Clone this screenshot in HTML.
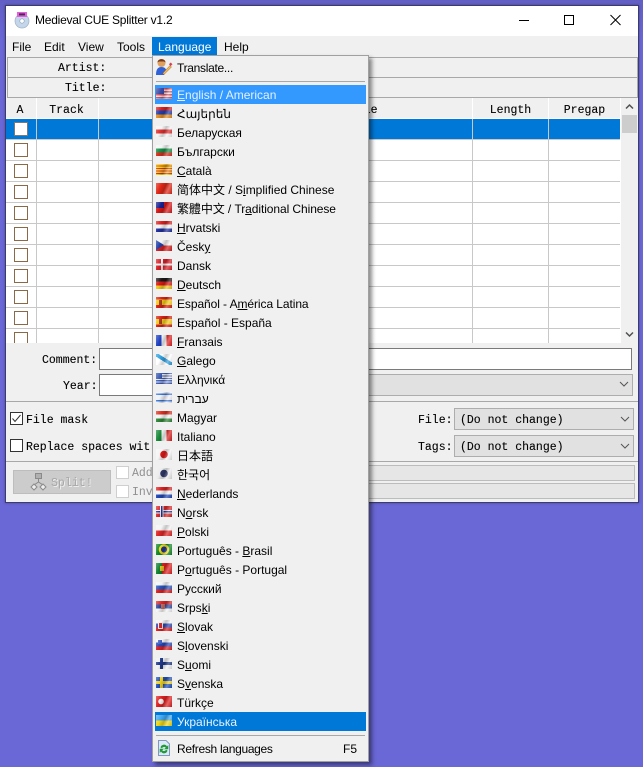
<!DOCTYPE html>
<html lang="en"><head><meta charset="utf-8"><title>Medieval CUE Splitter v1.2</title>
<style>
html,body{margin:0;padding:0}
body{width:643px;height:767px;overflow:hidden;position:relative;background:linear-gradient(#625fc4,#6a67d6 40px);font-family:"Liberation Sans","Noto Sans CJK SC",sans-serif;font-size:12px;color:#000}
div,span.a{position:absolute;box-sizing:border-box}
.m{font-family:"Liberation Mono",monospace;font-size:11.5px;white-space:pre;line-height:16px;-webkit-text-stroke:.1px #000}
#win{left:5px;top:5px;width:634px;height:498px;background:#f0f0f0;border:1px solid #3c3c68;box-shadow:0 0 2px rgba(30,30,80,.5)}
.abs{position:absolute}
.l{height:1px;background:#a8a8a8}
.h{height:1px;background:#c8c8c8;left:6px;width:614px}
.v{width:1px;background:#c8c8c8;top:119px;height:224px}
.cb{width:14px;height:14px;background:#fff;border:1px solid #8a6a46;left:14px}
.cmb{background:#e1e1e1;border:1px solid #adadad}
.th{top:98px;height:20px;background:#f0f0f0;text-align:center;line-height:25px}
#menu{left:152px;top:55px;width:217px;height:707px;background:#f0f0f0;border:1px solid #a0a0a0;box-shadow:3px 3px 4px rgba(0,0,0,.45)}
.r{left:155px;width:211px;height:19px;line-height:21px;padding-left:22px;white-space:nowrap}
.f{left:156px;width:16px;height:11px}
.f::after{content:"";position:absolute;inset:0;background:linear-gradient(115deg,rgba(255,255,255,.32),rgba(255,255,255,0) 30%,rgba(0,0,0,.2) 52%,rgba(255,255,255,.3) 72%,rgba(0,0,0,.16))}
u{text-decoration:underline;text-underline-offset:1px}
</style></head><body>
<div id="win"></div>

<!-- title bar -->
<div style="left:6px;top:6px;width:632px;height:30px;background:#fff"></div>
<svg class="abs" style="left:14px;top:11px" width="16" height="18" viewBox="0 0 16 18"><circle cx="8" cy="10" r="7" fill="#c4d6ea" stroke="#9fb0c4" stroke-width=".7"/><circle cx="8" cy="10" r="2.2" fill="#fff" stroke="#8a9ab0" stroke-width=".6"/><rect x="3" y="1" width="10" height="5" fill="#e85ae0"/><rect x="5" y="2.4" width="6" height="2" fill="#40304a"/></svg>
<div style="left:35px;top:13px;font-size:12px;line-height:15px;white-space:nowrap;letter-spacing:-.23px">Medieval CUE Splitter v1.2</div>
<svg class="abs" style="left:515px;top:10px" width="115" height="20" viewBox="0 0 115 20" fill="none" stroke="#000" stroke-width="1"><path d="M4 10.500H14"/><rect x="49.500" y="5.500" width="9" height="9"/><path d="M95.500 5L105.500 15M105.500 5L95.500 15"/></svg>

<!-- menu bar -->
<div style="left:152px;top:37px;width:65px;height:18px;background:#0078d7"></div>
<div style="left:12px;top:40px;line-height:14px">File</div>
<div style="left:44px;top:40px;line-height:14px">Edit</div>
<div style="left:78px;top:40px;line-height:14px">View</div>
<div style="left:117px;top:40px;line-height:14px">Tools</div>
<div style="left:158px;top:40px;line-height:14px;color:#fff">Language</div>
<div style="left:224px;top:40px;line-height:14px">Help</div>

<!-- artist / title -->
<div style="left:7px;top:57px;width:631px;height:41px;border:1px solid #a8a8a8;background:#f0f0f0"></div>
<div class="l" style="left:7px;top:77px;width:631px"></div>
<div class="m" style="left:58px;top:61px">Artist:</div>
<div class="m" style="left:65px;top:81px">Title:</div>

<!-- table -->
<div style="left:6px;top:98px;width:632px;height:245px;background:#fff"></div>
<div class="th m" style="left:6px;width:30px;padding-right:2px">A</div>
<div class="th m" style="left:37px;width:61px;padding-right:2px">Track</div>
<div class="th m" style="left:99px;width:373px"><span style="position:absolute;left:244px;top:0">Title</span></div>
<div class="th m" style="left:473px;width:75px">Length</div>
<div class="th m" style="left:549px;width:71px">Pregap</div>
<div style="left:6px;top:119px;width:614px;height:20px;background:#0078d7"></div>
<div class="v" style="left:36px"></div><div class="v" style="left:98px"></div><div class="v" style="left:472px"></div><div class="v" style="left:548px"></div>
<div class="h" style="top:139px"></div><div class="h" style="top:160px"></div><div class="h" style="top:181px"></div><div class="h" style="top:202px"></div><div class="h" style="top:223px"></div><div class="h" style="top:244px"></div><div class="h" style="top:265px"></div><div class="h" style="top:286px"></div><div class="h" style="top:307px"></div><div class="h" style="top:328px"></div>
<div class="cb" style="top:122px;border-color:#7a7a7a"></div><div class="cb" style="top:143px"></div><div class="cb" style="top:164px"></div><div class="cb" style="top:185px"></div><div class="cb" style="top:206px"></div><div class="cb" style="top:227px"></div><div class="cb" style="top:248px"></div><div class="cb" style="top:269px"></div><div class="cb" style="top:290px"></div><div class="cb" style="top:311px"></div><div class="cb" style="top:332px;height:11px;border-bottom:0"></div>
<!-- scrollbar -->
<div style="left:621px;top:98px;width:17px;height:245px;background:#f0f0f0"></div>
<div style="left:622px;top:115px;width:15px;height:18px;background:#cdcdcd"></div>
<svg class="abs" style="left:621px;top:98px" width="17" height="245" viewBox="0 0 17 245" fill="none" stroke="#505050" stroke-width="1.500"><path d="M5 10.500L8.500 7L12 10.500"/><path d="M5 234.500L8.500 238L12 234.500"/></svg>
<div style="left:6px;top:343px;width:632px;height:159px;background:#f0f0f0"></div>

<!-- fields -->
<div class="m" style="left:42px;top:353px">Comment:</div>
<div class="m" style="left:63px;top:379px">Year:</div>
<div style="left:99px;top:348px;width:533px;height:22px;background:#fff;border:1px solid #7a7a7a"></div>
<div style="left:99px;top:374px;width:60px;height:22px;background:#fff;border:1px solid #7a7a7a"></div>
<div class="cmb" style="left:360px;top:374px;width:273px;height:22px"></div>
<svg class="abs" style="left:619px;top:381px" width="10" height="7" fill="none" stroke="#555"><path d="M1 1L5 5L9 1"/></svg>
<div class="l" style="left:6px;top:401px;width:632px"></div>

<div style="left:10px;top:412px;width:13px;height:13px;background:#fff;border:1px solid #333"></div>
<svg class="abs" style="left:10px;top:412px" width="13" height="13" fill="none" stroke="#333"><path d="M2.500 6.500L5 9.500L10.500 3"/></svg>
<div class="m" style="left:26px;top:413px">File mask</div>
<div style="left:10px;top:439px;width:13px;height:13px;background:#fff;border:1px solid #333"></div>
<div class="m" style="left:26px;top:440px">Replace spaces wit</div>

<div class="m" style="left:418px;top:413px">File:</div>
<div class="m" style="left:418px;top:440px">Tags:</div>
<div class="cmb" style="left:454px;top:408px;width:180px;height:22px"></div>
<div class="cmb" style="left:454px;top:435px;width:180px;height:22px"></div>
<div class="m" style="left:460px;top:413px">(Do not change)</div>
<div class="m" style="left:460px;top:440px">(Do not change)</div>
<svg class="abs" style="left:620px;top:416px" width="10" height="7" fill="none" stroke="#555"><path d="M1 1L5 5L9 1"/></svg>
<svg class="abs" style="left:620px;top:443px" width="10" height="7" fill="none" stroke="#555"><path d="M1 1L5 5L9 1"/></svg>
<div class="l" style="left:6px;top:461px;width:632px"></div>

<!-- bottom -->
<div style="left:13px;top:470px;width:98px;height:24px;background:#cccccc;border:1px solid #bdbdbd"></div>
<svg class="abs" style="left:30px;top:472px" width="18" height="20" viewBox="0 0 18 20" fill="none" stroke="#8a8a8a"><rect x="5.500" y="1.500" width="6" height="5" fill="#b0b0b0"/><path d="M8.500 7V10M4 13L8.500 10L13 13"/><path d="M4 12L7 15L4 18L1 15Z" fill="#eee"/><path d="M13 12L16 15L13 18L10 15Z" fill="#eee"/></svg>
<div class="m" style="left:51px;top:476px;color:#a8a8a8;text-shadow:1px 1px 0 #eee;-webkit-text-stroke:0">Split!</div>
<div style="left:116px;top:466px;width:13px;height:13px;background:#fff;border:1px solid #cfcfcf"></div>
<div style="left:116px;top:485px;width:13px;height:13px;background:#fff;border:1px solid #cfcfcf"></div>
<div class="m" style="left:132px;top:466px;color:#909090;-webkit-text-stroke:0">Add</div>
<div class="m" style="left:132px;top:485px;color:#909090;-webkit-text-stroke:0">Inv</div>
<div style="left:360px;top:465px;width:275px;height:16px;background:#e6e6e6;border:1px solid #bcbcbc"></div>
<div style="left:360px;top:483px;width:275px;height:16px;background:#e6e6e6;border:1px solid #bcbcbc"></div>

<!-- language menu -->
<div id="menu"></div>
<svg class="abs" style="left:155px;top:58px" width="18" height="18" viewBox="0 0 18 18"><path d="M1 17C1 11 3 9 6.500 9S11 11 11.500 13L9 17Z" fill="#2f62d8"/><circle cx="6.500" cy="5" r="4" fill="#e0a060"/><path d="M2.500 4.500C2.500 0 10.500 0 10.500 4.500L9 3.500H4Z" fill="#7a3a18"/><path d="M8 15L15 7.500L16.500 9L9.500 16L8 16.500Z" fill="#f0c050" stroke="#a05030" stroke-width=".5"/><rect x="14.500" y="5" width="2.500" height="2.500" transform="rotate(45 15.700 6.200)" fill="#d84050"/></svg>
<div class="r" style="top:58px;letter-spacing:-.3px">Translate...</div>
<div class="l" style="left:156px;top:81px;width:209px"></div>

<div class="r" style="top:85px;background:#3399ff;color:#e4f0ff"><u>E</u>nglish / American</div>
<div class="r" style="top:104px">Հայերեն</div>
<div class="r" style="top:123px">Беларуская</div>
<div class="r" style="top:142px">Български</div>
<div class="r" style="top:161px"><u>C</u>atalà</div>
<div class="r" style="top:180px">简体中文 / S<u>i</u>mplified Chinese</div>
<div class="r" style="top:199px;font-family:'Liberation Sans','Noto Sans CJK TC',sans-serif;letter-spacing:-.08px">繁體中文 / Tr<u>a</u>ditional Chinese</div>
<div class="r" style="top:218px"><u>H</u>rvatski</div>
<div class="r" style="top:237px">Česk<u>y</u></div>
<div class="r" style="top:256px">Dansk</div>
<div class="r" style="top:275px"><u>D</u>eutsch</div>
<div class="r" style="top:294px;letter-spacing:-.08px">Español - A<u>m</u>érica Latina</div>
<div class="r" style="top:313px">Español - España</div>
<div class="r" style="top:332px"><u>F</u>ranзais</div>
<div class="r" style="top:351px"><u>G</u>alego</div>
<div class="r" style="top:370px">Ελληνικά</div>
<div class="r" style="top:389px"><bdi>עברית</bdi></div>
<div class="r" style="top:408px">Magyar</div>
<div class="r" style="top:427px">Italiano</div>
<div class="r" style="top:446px;font-family:'Liberation Sans','Noto Sans CJK JP',sans-serif">日本語</div>
<div class="r" style="top:465px;font-family:'Liberation Sans','Noto Sans CJK KR',sans-serif">한국어</div>
<div class="r" style="top:484px"><u>N</u>ederlands</div>
<div class="r" style="top:503px">N<u>o</u>rsk</div>
<div class="r" style="top:522px"><u>P</u>olski</div>
<div class="r" style="top:541px">Português - <u>B</u>rasil</div>
<div class="r" style="top:560px">P<u>o</u>rtuguês - Portugal</div>
<div class="r" style="top:579px">Русский</div>
<div class="r" style="top:598px">Srps<u>k</u>i</div>
<div class="r" style="top:617px"><u>S</u>lovak</div>
<div class="r" style="top:636px">S<u>l</u>ovenski</div>
<div class="r" style="top:655px">S<u>u</u>omi</div>
<div class="r" style="top:674px">S<u>v</u>enska</div>
<div class="r" style="top:693px">Türkçe</div>
<div class="r" style="top:712px;background:#0078d7;color:#e8f2fc">Українська</div>
<div class="l" style="left:156px;top:735px;width:209px"></div>
<svg class="abs" style="left:157px;top:740px" width="14" height="16" viewBox="0 0 14 16"><path d="M1.500 .5H9L12.500 4V15.500H1.500Z" fill="#dceaf8" stroke="#7f98c0"/><path d="M3.500 7.500A3.500 3.500 0 0 1 10 6.500L11.300 5V9.300H7L8.800 7.800A2.200 2.200 0 0 0 5 8.300ZM10.500 10.500A3.500 3.500 0 0 1 4 11.500L2.700 13V8.700H7L5.200 10.200A2.200 2.200 0 0 0 9 9.700Z" fill="#1f9a35"/></svg>
<div class="r" style="top:739px;letter-spacing:-.3px">Refresh languages<span style="position:absolute;left:188px;top:0;letter-spacing:0">F5</span></div>

<!-- flags -->
<div class="f" style="top:88px;background:repeating-linear-gradient(#d05060 0 1.500px,#f0e0e8 1.500px 3px)"><div style="left:0;top:0;width:8px;height:6px;background:#3a4aa8"></div></div>
<div class="f" style="top:107px;background:linear-gradient(#d82020 33%,#2040b0 33% 66%,#e89020 66%)"></div>
<div class="f" style="top:126px;background:linear-gradient(#f4f4f4 33%,#e03030 33% 66%,#f4f4f4 66%)"></div>
<div class="f" style="top:145px;background:linear-gradient(#f4f4f4 33%,#189048 33% 66%,#d83020 66%)"></div>
<div class="f" style="top:164px;background:repeating-linear-gradient(#f0d020 0 1.300px,#d83020 1.300px 2.500px)"></div>
<div class="f" style="top:183px;background:#e02818"></div>
<div class="f" style="top:202px;background:#d81818"><div style="left:0;top:0;width:8px;height:6px;background:#182090"></div></div>
<div class="f" style="top:221px;background:linear-gradient(#d82020 33%,#f4f4f4 33% 66%,#2030a0 66%)"></div>
<div class="f" style="top:240px;background:linear-gradient(#f4f4f4 50%,#d82020 50%)"><div style="left:0;top:0;width:0;height:0;border-left:8px solid #2040a8;border-top:5.500px solid transparent;border-bottom:5.500px solid transparent"></div></div>
<div class="f" style="top:259px;background:linear-gradient(90deg,transparent 5px,#f4f4f4 5px 7px,transparent 7px),linear-gradient(transparent 4.500px,#f4f4f4 4.500px 6.500px,transparent 6.500px),#d82028"></div>
<div class="f" style="top:278px;background:linear-gradient(#181818 33%,#d81818 33% 66%,#f0c818 66%)"></div>
<div class="f" style="top:297px;background:linear-gradient(#d82018 25%,#f4cc18 25% 75%,#d82018 75%)"><div style="left:3px;top:3px;width:3px;height:5px;background:#a84020"></div></div>
<div class="f" style="top:316px;background:linear-gradient(#d82018 25%,#f4cc18 25% 75%,#d82018 75%)"><div style="left:3px;top:3px;width:3px;height:5px;background:#a84020"></div></div>
<div class="f" style="top:335px;background:linear-gradient(90deg,#2040c0 33%,#f4f4f4 33% 66%,#e02020 66%)"></div>
<div class="f" style="top:354px;background:linear-gradient(32deg,#fff 40%,#30a0e0 40% 60%,#fff 60%)"></div>
<div class="f" style="top:373px;background:repeating-linear-gradient(#4060b8 0 1.200px,#e8e8f0 1.200px 2.400px)"><div style="left:0;top:0;width:6px;height:6px;background:#3858b0"></div></div>
<div class="f" style="top:392px;background:linear-gradient(#f0f0f8 1.500px,#3878d8 1.500px 3px,#f0f0f8 3px 8px,#3878d8 8px 9.500px,#f0f0f8 9.500px)"></div>
<div class="f" style="top:411px;background:linear-gradient(#d83020 33%,#f4f4f4 33% 66%,#308838 66%)"></div>
<div class="f" style="top:430px;background:linear-gradient(90deg,#188838 33%,#f4f4f4 33% 66%,#d82020 66%)"></div>
<div class="f" style="top:449px;background:radial-gradient(circle at 8px 5.500px,#e01818 3.500px,#f4f4f4 4px)"></div>
<div class="f" style="top:468px;background:radial-gradient(circle at 8px 5.500px,#30386a 3.500px,#ececec 4px)"></div>
<div class="f" style="top:487px;background:linear-gradient(#d82020 33%,#f4f4f4 33% 66%,#2048b8 66%)"></div>
<div class="f" style="top:506px;background:linear-gradient(90deg,transparent 4px,#f0f0f0 4px 5px,#2030a0 5px 6.500px,#f0f0f0 6.500px 7.500px,transparent 7.500px),linear-gradient(transparent 4px,#f0f0f0 4px 5px,#2030a0 5px 6.500px,#f0f0f0 6.500px 7.500px,transparent 7.500px),#d82828"></div>
<div class="f" style="top:525px;background:linear-gradient(#f4f4f4 50%,#e02828 50%)"></div>
<div class="f" style="top:544px;background:radial-gradient(circle at 8px 5.500px,#203890 2.800px,#f0d820 3.200px 5px,#108828 5.500px)"></div>
<div class="f" style="top:563px;background:linear-gradient(90deg,#108030 37%,#e02020 37%)"><div style="left:4px;top:3px;width:4px;height:5px;background:#e0c020"></div></div>
<div class="f" style="top:582px;background:linear-gradient(#f4f4f4 33%,#2858c0 33% 66%,#e02020 66%)"></div>
<div class="f" style="top:601px;background:linear-gradient(#d82828 33%,#2848a0 33% 66%,#f4f4f4 66%)"><div style="left:5px;top:3px;width:4px;height:5px;background:#c87060"></div></div>
<div class="f" style="top:620px;background:linear-gradient(#f4f4f4 33%,#2848b8 33% 66%,#e02020 66%)"><div style="left:2px;top:2px;width:5px;height:7px;background:#d82828;border:1px solid #f0f0f0"></div></div>
<div class="f" style="top:639px;background:linear-gradient(#f4f4f4 33%,#2848b8 33% 66%,#e02020 66%)"><div style="left:2px;top:1px;width:4px;height:4px;background:#4060c0"></div></div>
<div class="f" style="top:658px;background:linear-gradient(90deg,transparent 4px,#203888 4px 7px,transparent 7px),linear-gradient(transparent 4px,#203888 4px 7px,transparent 7px),#f0f0f0"></div>
<div class="f" style="top:677px;background:linear-gradient(90deg,transparent 4px,#f0d020 4px 7px,transparent 7px),linear-gradient(transparent 4px,#f0d020 4px 7px,transparent 7px),#2050b8"></div>
<div class="f" style="top:696px;background:radial-gradient(circle at 5px 5.500px,#f4f4f4 2.500px,#e02020 3px)"></div>
<div class="f" style="top:715px;background:linear-gradient(#40a8f0 50%,#f0d818 50%)"></div>
</body></html>
